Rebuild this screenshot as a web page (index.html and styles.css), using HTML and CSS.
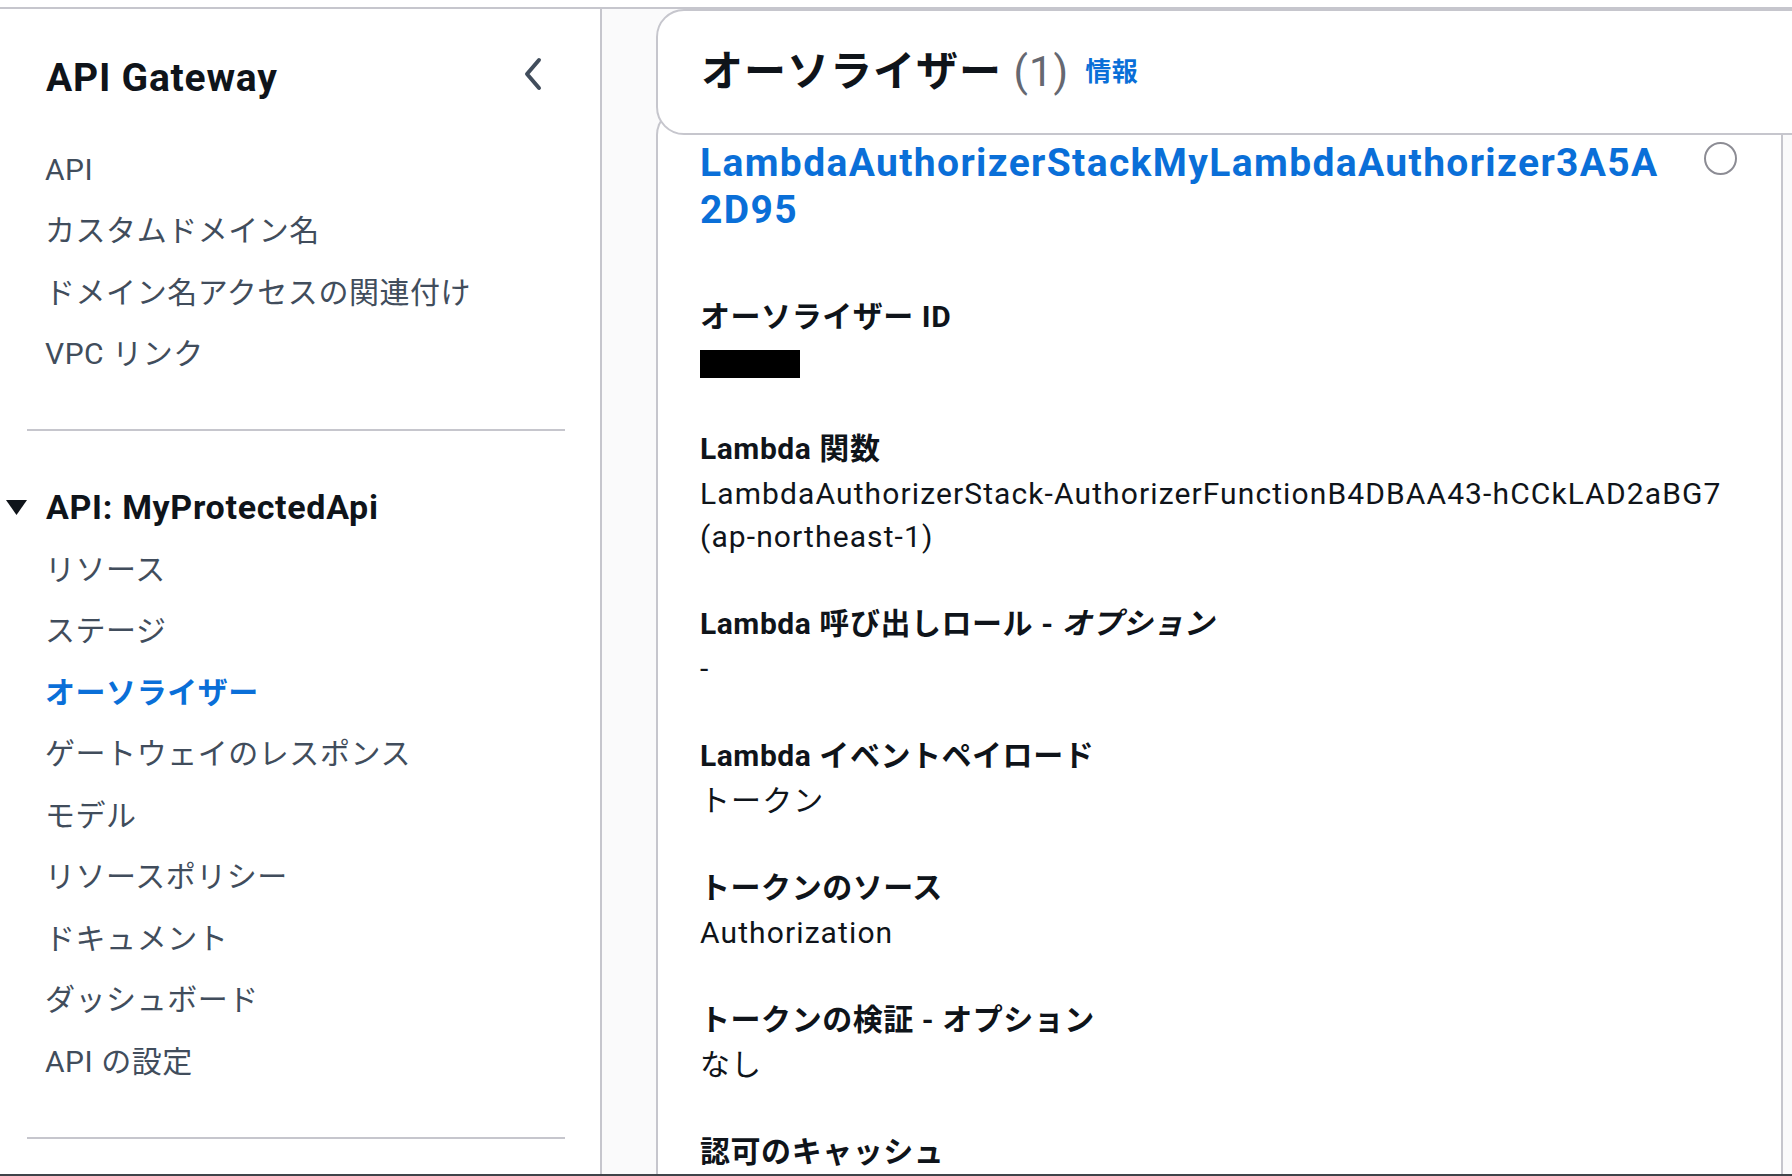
FILE: index.html
```html
<!DOCTYPE html>
<html lang="ja">
<head>
<meta charset="utf-8">
<title>API Gateway - オーソライザー</title>
<link rel="stylesheet" href="styles.css">
</head>
<body>
<div class="window">
  <nav class="sidebar">
    <div class="side-head">
      <span class="side-title">API Gateway</span>
      <svg class="chevron" width="24" height="36" viewBox="0 0 24 36" aria-hidden="true"><polyline points="18,4 6,18 18,32" fill="none" stroke="#414d5c" stroke-width="4" stroke-linecap="round" stroke-linejoin="round"/></svg>
    </div>
    <ul class="nav-list first">
      <li class="nav-item">API</li>
      <li class="nav-item">カスタムドメイン名</li>
      <li class="nav-item">ドメイン名アクセスの関連付け</li>
      <li class="nav-item">VPC リンク</li>
    </ul>
    <div class="divider"></div>
    <div class="section-head">
      <svg class="caret" width="21" height="15" viewBox="0 0 21 15" aria-hidden="true"><polygon points="0,0 21,0 10.5,15" fill="#0f141a"/></svg>
      <span>API: MyProtectedApi</span>
    </div>
    <ul class="nav-list">
      <li class="nav-item">リソース</li>
      <li class="nav-item">ステージ</li>
      <li class="nav-item active">オーソライザー</li>
      <li class="nav-item">ゲートウェイのレスポンス</li>
      <li class="nav-item">モデル</li>
      <li class="nav-item">リソースポリシー</li>
      <li class="nav-item">ドキュメント</li>
      <li class="nav-item">ダッシュボード</li>
      <li class="nav-item">API の設定</li>
    </ul>
    <div class="divider"></div>
  </nav>
  <main class="main">
    <header class="page-head">
      <h2 class="page-title">オーソライザー <span class="count">(1)</span></h2>
      <a class="info">情報</a>
    </header>
    <section class="card">
      <div class="card-top">
        <a class="card-link">LambdaAuthorizerStackMyLambdaAuthorizer3A5A<wbr>2D95</a>
        <span class="radio"></span>
      </div>
      <div class="fields">
        <div class="field">
          <div class="label">オーソライザー ID</div>
          <div class="value"><span class="redacted"></span></div>
        </div>
        <div class="field">
          <div class="label">Lambda 関数</div>
          <div class="value"><span class="nowrap">LambdaAuthorizerStack-AuthorizerFunctionB4DBAA43-hCCkLAD2aBG7</span> (ap-northeast-1)</div>
        </div>
        <div class="field">
          <div class="label">Lambda 呼び出しロール - <em>オプション</em></div>
          <div class="value">-</div>
        </div>
        <div class="field">
          <div class="label">Lambda イベントペイロード</div>
          <div class="value">トークン</div>
        </div>
        <div class="field">
          <div class="label">トークンのソース</div>
          <div class="value">Authorization</div>
        </div>
        <div class="field">
          <div class="label">トークンの検証 - オプション</div>
          <div class="value">なし</div>
        </div>
        <div class="field">
          <div class="label">認可のキャッシュ</div>
        </div>
      </div>
    </section>
  </main>
</div>
</body>
</html>
```

FILE: styles.css
```css
* { box-sizing: border-box; }

html, body {
  margin: 0;
  padding: 0;
  background: #ffffff;
}

body {
  font-family: Roboto, "Noto Sans CJK JP", sans-serif;
  letter-spacing: 0.034em;
  color: #0f141a;
  width: 1792px;
  height: 1176px;
  overflow: hidden;
}

.window {
  margin-top: 7px;
  height: 1169px;
  border-top: 2px solid #c6c6cd;
  border-bottom: 2px solid #3f4349;
  display: flex;
  overflow: hidden;
}

/* ---------- sidebar ---------- */
.sidebar {
  width: 602px;
  flex-shrink: 0;
  border-right: 2px solid #c6c6cd;
  background: #ffffff;
  padding-top: 45px;
}

.side-head {
  display: flex;
  justify-content: space-between;
  align-items: flex-start;
  padding: 0 55px 0 46px;
  height: 48px;
}

.side-title {
  font-size: 39px;
  line-height: 48px;
  font-weight: 700;
  letter-spacing: 0.02em;
  color: #0f141a;
}

.chevron {
  display: block;
  margin-top: 2px;
}

.nav-list {
  list-style: none;
  margin: 0;
  padding: 0 0 0 45px;
}

.nav-list.first {
  margin-top: 36.25px;
}

.nav-item {
  font-size: 30px;
  line-height: 43px;
  padding: 9.25px 0;
  color: #414d5c;
  white-space: nowrap;
}

.nav-item.active {
  color: #0a6fd8;
  font-weight: 700;
}

.divider {
  height: 2px;
  background: #c6c6cd;
  margin: 44.75px 35px 0 27px;
}

.section-head {
  display: flex;
  align-items: center;
  margin-top: 54.5px;
  margin-bottom: 9.75px;
  height: 43px;
  font-size: 34px;
  font-weight: 700;
  letter-spacing: 0.02em;
  color: #0f141a;
}

.caret {
  display: block;
  margin: 0 19px 0 6px;
  flex-shrink: 0;
}

/* ---------- main ---------- */
.main {
  flex: 1;
  min-width: 0;
  background: #fafafb;
  padding-left: 54px;
  overflow: hidden;
}

.page-head {
  position: relative;
  z-index: 2;
  height: 126px;
  margin-right: -40px;
  border: 2px solid #c6c6cd;
  border-radius: 28px;
  background: #ffffff;
  display: flex;
  align-items: center;
  padding-left: 43px;
}

.page-title {
  margin: 0;
  font-size: 42px;
  line-height: 52px;
  font-weight: 700;
  letter-spacing: 0.024em;
  color: #0f141a;
}

.count {
  font-weight: 400;
  color: #656871;
}

.info {
  margin-left: 16px;
  font-size: 26px;
  font-weight: 700;
  color: #0a6fd8;
  line-height: 52px;
}

.card {
  position: relative;
  z-index: 1;
  margin-top: -28px;
  margin-right: 9px;
  min-height: 1200px;
  border: 2px solid #c6c6cd;
  border-bottom: none;
  border-radius: 28px 28px 0 0;
  background: #ffffff;
  padding: 30.5px 44px 0 42px;
}

.card-top {
  display: flex;
  justify-content: space-between;
  align-items: flex-start;
}

.card-link {
  display: block;
  max-width: 960px;
  font-size: 39px;
  line-height: 47px;
  font-weight: 700;
  letter-spacing: 0.035em;
  color: #0a6fd8;
}

.radio {
  display: block;
  flex-shrink: 0;
  width: 33px;
  height: 33px;
  margin-top: 2.5px;
  border: 2.5px solid #8c8c94;
  border-radius: 50%;
}

.fields {
  margin-top: 61.5px;
}

.field {
  margin-bottom: 44px;
}

.label {
  font-size: 30px;
  line-height: 43px;
  font-weight: 700;
  color: #0f141a;
}

.label em {
  font-style: italic;
}

.value {
  margin-top: 2px;
  font-size: 30px;
  line-height: 43px;
  letter-spacing: 0.037em;
  color: #0f141a;
}

.nowrap {
  white-space: nowrap;
}

.redacted {
  display: inline-block;
  width: 100px;
  height: 28px;
  background: #000000;
  vertical-align: middle;
}
```
